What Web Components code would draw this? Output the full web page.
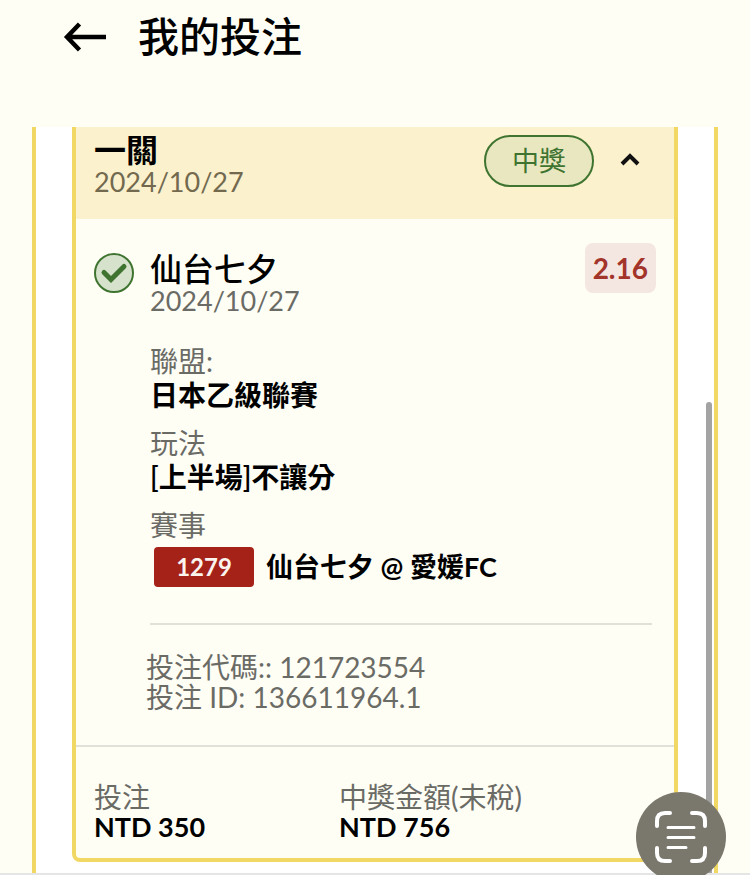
<!DOCTYPE html>
<html lang="zh-Hant">
<head>
<meta charset="utf-8">
<meta name="viewport" content="width=device-width, initial-scale=1">
<title>我的投注</title>
<style>
    :root {
        --clr-bg: #fefef5;
        --clr-panel: #ffffff;
        --clr-border: #f1d864;
        --clr-band: #fbf1cd;
        --clr-text: #000000;
        --clr-muted: #6b6b66;
        --clr-rule: #e1e1da;
        --clr-win: #3f7430;
        --clr-lose: #a42218;
    }

    body {
        margin: 0;
        background-color: var(--clr-bg);
        color: var(--clr-text);
        font-family: Lato, "Noto Sans CJK TC", sans-serif;
        font-size: 28px;
        line-height: 30px;
    }
</style>
</head>
<body>
<bet-screen>
    <screen-header slot="header">我的投注</screen-header>

    <bet-card>
        <bet-summary slot="summary" status="中獎">
            <span slot="title">一關</span>
            <span slot="date">2024/10/27</span>
        </bet-summary>

        <bet-leg odds="2.16">
            <span slot="title">仙台七夕</span>
            <span slot="date">2024/10/27</span>
            <bet-field label="聯盟:">日本乙級聯賽</bet-field>
            <bet-field label="玩法">[上半場]不讓分</bet-field>
            <bet-field label="賽事">
                <match-line code="1279">仙台七夕 @ 愛媛FC</match-line>
            </bet-field>
            <span slot="code">投注代碼:: 121723554</span>
            <span slot="code">投注 ID: 136611964.1</span>
        </bet-leg>

        <bet-amount slot="totals" label="投注">NTD 350</bet-amount>
        <bet-amount slot="totals" label="中獎金額(未稅)">NTD 756</bet-amount>
    </bet-card>

    <scan-button slot="float"></scan-button>
</bet-screen>

<script>
const define = (name, html, setup) => {
    const template = document.createElement("template");
    template.innerHTML = html;

    customElements.define(name, class extends HTMLElement {
        constructor() {
            super();

            const shadow = this.attachShadow({mode: "open"});

            shadow.append(template.content.cloneNode(true));
        }

        connectedCallback() {
            if (setup) setup(this, this.shadowRoot);
        }
    });
};

define("bet-screen",
    `
        <style>
            :host {
                display: flex;
                flex-direction: column;
                position: relative;
                min-height: 100vh;
                overflow: hidden;
            }

            .panel {
                box-sizing: border-box;
                position: relative;
                flex: 1;
                margin: 0 32px;
                padding: 0 36px 11px;
                background-color: var(--clr-panel);
                border: 4px solid var(--clr-border);
                border-width: 0 4px;
            }

            /* overlay scrollbar thumb */
            .thumb {
                position: absolute;
                top: 275px;
                right: 2px;
                bottom: 0;
                width: 6px;
                border-radius: 3px 3px 0 0;
                background-color: #a3a3a3;
            }

            .edge {
                height: 2px;
                background-color: #e5e5e5;
            }
        </style>
        <slot name="header"></slot>
        <main class="panel">
            <slot></slot>
            <div class="thumb"></div>
        </main>
        <div class="edge"></div>
        <slot name="float"></slot>
    `);

define("screen-header",
    `
        <style>
            :host {
                box-sizing: border-box;
                display: flex;
                align-items: center;
                gap: 30px;
                padding: 12px 62px 65px;
            }

            button {
                display: flex;
                padding: 0;
                border: 0;
                background: none;
                color: inherit;
            }

            h1 {
                margin: 0;
                font-size: 41px;
                font-weight: 500;
                line-height: 50px;
            }
        </style>
        <button type="button" aria-label="返回">
            <svg width="46" height="32" viewBox="0 0 46 32" fill="none" stroke="currentColor" stroke-width="4.500">
                <path d="M44 16H5M17.500 3L5 16L17.500 29" />
            </svg>
        </button>
        <h1><slot></slot></h1>
    `);

define("bet-card",
    `
        <style>
            :host {
                display: block;
                background-color: var(--clr-bg);
                border: 4px solid var(--clr-border);
                border-top: 0;
                border-radius: 0 0 8px 8px;
            }

            footer {
                display: grid;
                grid-template-columns: 245px 1fr;
                padding: 35px 18px 16px;
                border-top: 2px solid var(--clr-rule);
            }
        </style>
        <slot name="summary"></slot>
        <slot></slot>
        <footer><slot name="totals"></slot></footer>
    `);

define("bet-summary",
    `
        <style>
            :host {
                display: flex;
                align-items: flex-start;
                padding: 6px 34px 22px 18px;
                background-color: var(--clr-band);
            }

            .text {
                flex: 1;
            }

            h2 {
                margin: 0;
                font-size: 32px;
                font-weight: 600;
                line-height: 34px;
            }

            .date {
                color: #72694f;
                font-size: 27px;
            }

            .status {
                box-sizing: border-box;
                margin: 2px 26px 0 0;
                padding: 0 26px;
                border: 2px solid var(--clr-win);
                border-radius: 26px;
                background-color: #e8e7c0;
                color: var(--clr-win);
                font-size: 27px;
                line-height: 48px;
            }

            button {
                display: flex;
                margin-top: 16px;
                padding: 0;
                border: 0;
                background: none;
                color: #111111;
            }
        </style>
        <div class="text">
            <h2><slot name="title"></slot></h2>
            <div class="date"><slot name="date"></slot></div>
        </div>
        <div class="status"></div>
        <button type="button" aria-label="收合" aria-expanded="true">
            <svg width="20" height="20" viewBox="0 0 20 20" fill="none" stroke="currentColor" stroke-width="4">
                <path d="M2 15L10 7L18 15" />
            </svg>
        </button>
    `,
    (host, root) => {
        root.querySelector(".status").textContent = host.getAttribute("status");
    });

define("bet-leg",
    `
        <style>
            :host {
                display: grid;
                grid-template-columns: 40px 1fr auto;
                column-gap: 16px;
                padding: 24px 18px 33px;
            }

            .tick {
                margin-top: 10px;
            }

            .head {
                padding-top: 9px;
            }

            h3 {
                margin: 0;
                font-size: 32px;
                font-weight: 500;
                line-height: 34px;
            }

            .date {
                color: var(--clr-muted);
                font-size: 27px;
            }

            .odds {
                align-self: start;
                padding: 0 8px;
                border-radius: 8px;
                background-color: #f4e7e1;
                color: #a3342a;
                font-weight: 700;
                line-height: 50px;
            }

            .fields {
                grid-column: 2 / -1;
                display: flex;
                flex-direction: column;
                gap: 14px;
                margin: 30px 4px 0 0;
                padding-bottom: 36px;
                border-bottom: 2px solid var(--clr-rule);
            }

            .codes {
                grid-column: 2 / -1;
                display: flex;
                flex-direction: column;
                margin: 27px 0 0 -4px;
                color: var(--clr-muted);
            }
        </style>
        <svg class="tick" width="40" height="40" viewBox="0 0 40 40" fill="none">
            <circle cx="20" cy="20" r="19" fill="#d7e2cd" stroke="#3f7430" stroke-width="2" />
            <path d="M10 19.500L17 26.500L30 13.500" stroke="#3f7430" stroke-width="5" stroke-linecap="round" />
        </svg>
        <div class="head">
            <h3><slot name="title"></slot></h3>
            <div class="date"><slot name="date"></slot></div>
        </div>
        <div class="odds"></div>
        <div class="fields"><slot></slot></div>
        <div class="codes"><slot name="code"></slot></div>
    `,
    (host, root) => {
        root.querySelector(".odds").textContent = host.getAttribute("odds");
    });

define("bet-field",
    `
        <style>
            :host {
                display: block;
            }

            .label {
                color: var(--clr-muted);
            }

            .value {
                font-weight: 600;
                line-height: 38px;
            }
        </style>
        <div class="label"></div>
        <div class="value"><slot></slot></div>
    `,
    (host, root) => {
        root.querySelector(".label").textContent = host.getAttribute("label");
    });

define("match-line",
    `
        <style>
            :host {
                display: flex;
                align-items: center;
                gap: 12px;
                padding: 7px 0 0 4px;
                font-size: 27px;
                font-weight: 700;
            }

            .code {
                box-sizing: border-box;
                min-width: 100px;
                padding: 0 20px;
                border-radius: 4px;
                background-color: var(--clr-lose);
                color: #fbf3ee;
                font-size: 24px;
                line-height: 40px;
                text-align: center;
            }
        </style>
        <span class="code"></span>
        <span><slot></slot></span>
    `,
    (host, root) => {
        root.querySelector(".code").textContent = host.getAttribute("code");
    });

define("bet-amount",
    `
        <style>
            :host {
                display: block;
            }

            .label {
                color: var(--clr-muted);
            }

            .value {
                font-size: 27px;
                font-weight: 700;
            }
        </style>
        <div class="label"></div>
        <div class="value"><slot></slot></div>
    `,
    (host, root) => {
        root.querySelector(".label").textContent = host.getAttribute("label");
    });

define("scan-button",
    `
        <style>
            :host {
                position: absolute;
                right: 24px;
                bottom: -7px;
            }

            button {
                display: flex;
                align-items: center;
                justify-content: center;
                width: 90px;
                height: 90px;
                padding: 0;
                border: 0;
                border-radius: 50%;
                background-color: #7a776d;
                color: #ffffff;
            }
        </style>
        <button type="button" aria-label="掃描文字">
            <svg width="52" height="52" viewBox="0 0 52 52" fill="none" stroke="currentColor" stroke-width="3" stroke-linecap="round">
                <path d="M2 15V10Q2 2 10 2H15M37 2H42Q50 2 50 10V15M50 37V42Q50 50 42 50H37M15 50H10Q2 50 2 42V37" stroke-width="4" />
                <path d="M13 16.500H39M13 26.500H39M13 36.500H31" />
            </svg>
        </button>
    `);
</script>
</body>
</html>
